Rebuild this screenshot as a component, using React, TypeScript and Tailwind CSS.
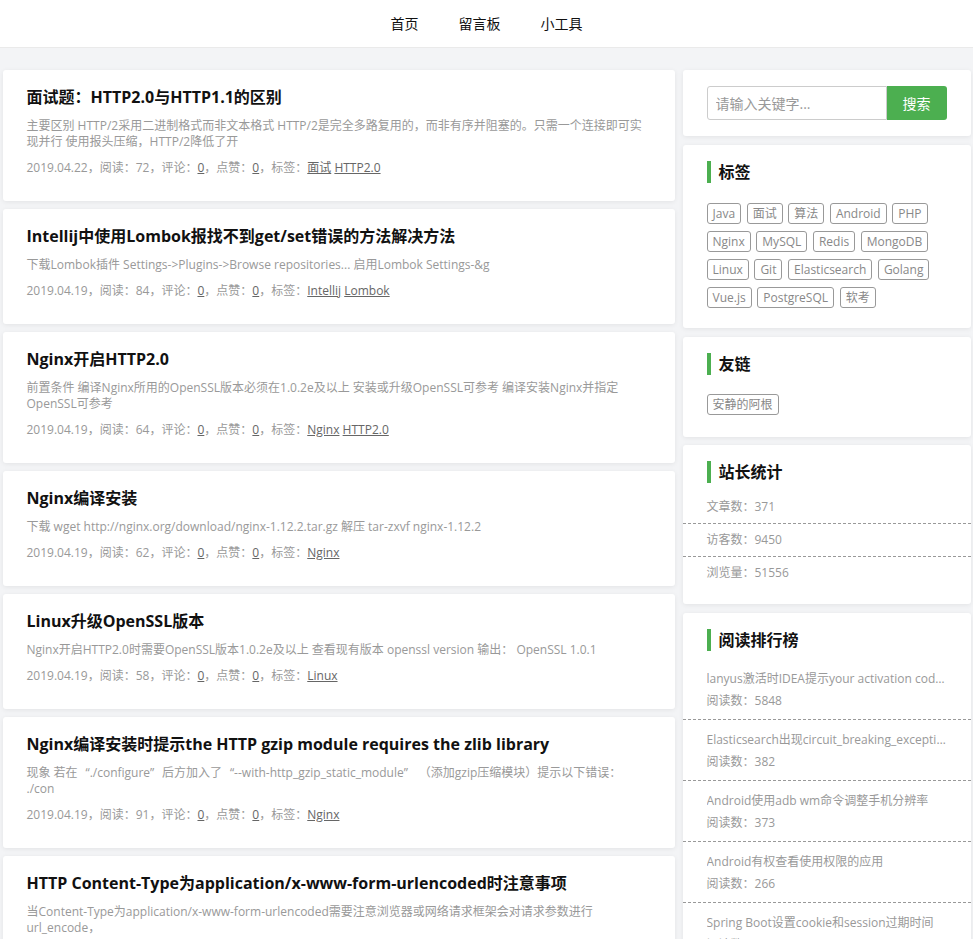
import React from "react";

type Post = {
  title: string;
  summary: React.ReactNode;
  date: string;
  reads: number;
  tags: string[];
  hover?: boolean;
};

const QO = () => <span className="inline-block w-[12px] text-right">“</span>;
const QC = () => <span className="inline-block w-[12px] text-left">”</span>;

const posts: Post[] = [
  {
    title: "面试题：HTTP2.0与HTTP1.1的区别",
    summary:
      "主要区别 HTTP/2采用二进制格式而非文本格式 HTTP/2是完全多路复用的，而非有序并阻塞的。只需一个连接即可实现并行 使用报头压缩，HTTP/2降低了开",
    date: "2019.04.22",
    reads: 72,
    tags: ["面试", "HTTP2.0"],
  },
  {
    title: "Intellij中使用Lombok报找不到get/set错误的方法解决方法",
    summary:
      "下载Lombok插件 Settings->Plugins->Browse repositories... 启用Lombok Settings-&g",
    date: "2019.04.19",
    reads: 84,
    tags: ["Intellij", "Lombok"],
  },
  {
    title: "Nginx开启HTTP2.0",
    summary:
      "前置条件 编译Nginx所用的OpenSSL版本必须在1.0.2e及以上 安装或升级OpenSSL可参考 编译安装Nginx并指定OpenSSL可参考",
    date: "2019.04.19",
    reads: 64,
    tags: ["Nginx", "HTTP2.0"],
    hover: true,
  },
  {
    title: "Nginx编译安装",
    summary:
      "下载 wget http://nginx.org/download/nginx-1.12.2.tar.gz 解压 tar-zxvf nginx-1.12.2",
    date: "2019.04.19",
    reads: 62,
    tags: ["Nginx"],
  },
  {
    title: "Linux升级OpenSSL版本",
    summary:
      "Nginx开启HTTP2.0时需要OpenSSL版本1.0.2e及以上 查看现有版本 openssl version 输出： OpenSSL 1.0.1",
    date: "2019.04.19",
    reads: 58,
    tags: ["Linux"],
  },
  {
    title: "Nginx编译安装时提示the HTTP gzip module requires the zlib library",
    summary: (
      <>
        现象 若在<QO />./configure<QC />后方加入了<QO />--with-http_gzip_static_module
        <QC /> （添加gzip压缩模块）提示以下错误：
        <br />
        ./con
      </>
    ),
    date: "2019.04.19",
    reads: 91,
    tags: ["Nginx"],
  },
  {
    title: "HTTP Content-Type为application/x-www-form-urlencoded时注意事项",
    summary:
      "当Content-Type为application/x-www-form-urlencoded需要注意浏览器或网络请求框架会对请求参数进行url_encode，",
    date: "2019.04.19",
    reads: 103,
    tags: ["HTTP"],
  },
  {
    title: "Spring Boot设置cookie和session过期时间",
    summary:
      "设置cookie过期时间 在application.properties中配置 server.servlet.session.cookie.max-age",
    date: "2019.04.18",
    reads: 250,
    tags: ["Spring Boot"],
  },
];

const tagList = [
  "Java",
  "面试",
  "算法",
  "Android",
  "PHP",
  "Nginx",
  "MySQL",
  "Redis",
  "MongoDB",
  "Linux",
  "Git",
  "Elasticsearch",
  "Golang",
  "Vue.js",
  "PostgreSQL",
  "软考",
];

const ranks = [
  { t: "lanyus激活时IDEA提示your activation code is not valid", n: 5848 },
  { t: "Elasticsearch出现circuit_breaking_exception异常", n: 382 },
  { t: "Android使用adb wm命令调整手机分辨率", n: 373 },
  { t: "Android有权查看使用权限的应用", n: 266 },
  { t: "Spring Boot设置cookie和session过期时间", n: 250 },
];

const cardCls =
  "rounded-[3px] bg-white shadow-[0_1px_5px_rgba(0,0,0,0.07)]";

function Tag({ text }: { text: string }) {
  return (
    <span className="inline-flex h-[21px] items-center rounded-[3px] border border-[#999] px-[5px] text-[12px] leading-[19px] text-[#888]">
      {text}
    </span>
  );
}

function SideTitle({ text }: { text: string }) {
  return (
    <div className="flex h-[22px] items-center px-[24px]">
      <span className="h-[22px] w-[4px] bg-[#4caf50]" />
      <span className="ml-[8px] text-[16px] font-bold leading-[22px] text-[#111]">
        {text}
      </span>
    </div>
  );
}

function PostCard({ p }: { p: Post }) {
  return (
    <div
      className={`${cardCls} px-[24px] pb-[24.5px] pt-[16px] ${
        p.hover ? "bg-[#eeeeee]" : ""
      }`}
    >
      <h2 className="text-[16px] font-bold leading-[22px] text-[#111]">
        {p.title}
      </h2>
      <p className="mt-[10px] text-[12px] leading-[16px] text-[#999]">
        {p.summary}
      </p>
      <div className="mt-[10px] text-[12px] leading-[16px] text-[#999]">
        {p.date}，阅读：{p.reads}，评论：
        <a className="text-[#666] underline">0</a>，点赞：
        <a className="text-[#666] underline">0</a>，标签：
        {p.tags.map((t, i) => (
          <React.Fragment key={t}>
            {i > 0 ? " " : ""}
            <a className="text-[#666] underline">{t}</a>
          </React.Fragment>
        ))}
      </div>
    </div>
  );
}

export default function App() {
  return (
    <div className="min-h-screen bg-[#f3f4f6] font-['Open_Sans','Noto_Sans_CJK_SC',sans-serif]">
      <header className="flex h-[48px] items-center justify-center gap-[40px] border-b border-[#eaeaea] bg-white text-[14px] text-[#111]">
        <a>首页</a>
        <a>留言板</a>
        <a>小工具</a>
      </header>

      <div className="mx-auto flex w-[968px] items-start gap-[8px] pb-[20px] pt-[22px]">
        <main className="flex w-[672px] flex-col gap-[8.5px]">
          {posts.map((p) => (
            <PostCard key={p.title} p={p} />
          ))}
        </main>

        <aside className="flex w-[288px] flex-col gap-[8.5px]">
          <div className={`${cardCls} px-[24px] py-[16px]`}>
            <div className="flex h-[34px]">
              <input
                className="h-[34px] w-[180px] rounded-l-[3px] border border-[#ccc] px-[8px] text-[14px] text-[#333] outline-none placeholder:text-[#999]"
                placeholder="请输入关键字..."
              />
              <button className="h-[34px] w-[60px] rounded-r-[3px] bg-[#4caf50] text-[14px] text-white">
                搜索
              </button>
            </div>
          </div>

          <div className={`${cardCls} pb-[20.5px] pt-[16px]`}>
            <SideTitle text="标签" />
            <div className="mt-[20px] flex flex-wrap gap-x-[5.6px] gap-y-[7px] px-[24px]">
              {tagList.map((t) => (
                <Tag key={t} text={t} />
              ))}
            </div>
          </div>

          <div className={`${cardCls} pb-[22px] pt-[16px]`}>
            <SideTitle text="友链" />
            <div className="mt-[19px] flex px-[24px]">
              <Tag text="安静的阿根" />
            </div>
          </div>

          <div className={`${cardCls} pb-[15px] pt-[16px]`}>
            <SideTitle text="站长统计" />
            <div className="mt-[8px] text-[12px] leading-[16px] text-[#999]">
              <div className="border-b border-dashed border-[#999] px-[24px] py-[8px]">
                文章数：371
              </div>
              <div className="border-b border-dashed border-[#999] px-[24px] py-[8px]">
                访客数：9450
              </div>
              <div className="px-[24px] py-[8px]">浏览量：51556</div>
            </div>
          </div>

          <div className={`${cardCls} pb-[10px] pt-[16px]`}>
            <SideTitle text="阅读排行榜" />
            <div className="mt-[8px]">
              {ranks.map((r, i) => (
                <div
                  key={r.t}
                  className={`px-[24px] pb-[7px] pt-[9px] ${
                    i < ranks.length - 1
                      ? "border-b border-dashed border-[#999]"
                      : ""
                  }`}
                >
                  <div className="truncate text-[12px] leading-[22px] text-[#999]">
                    {r.t}
                  </div>
                  <div className="text-[12px] leading-[22px] text-[#999]">
                    阅读数：{r.n}
                  </div>
                </div>
              ))}
            </div>
          </div>
        </aside>
      </div>
    </div>
  );
}
